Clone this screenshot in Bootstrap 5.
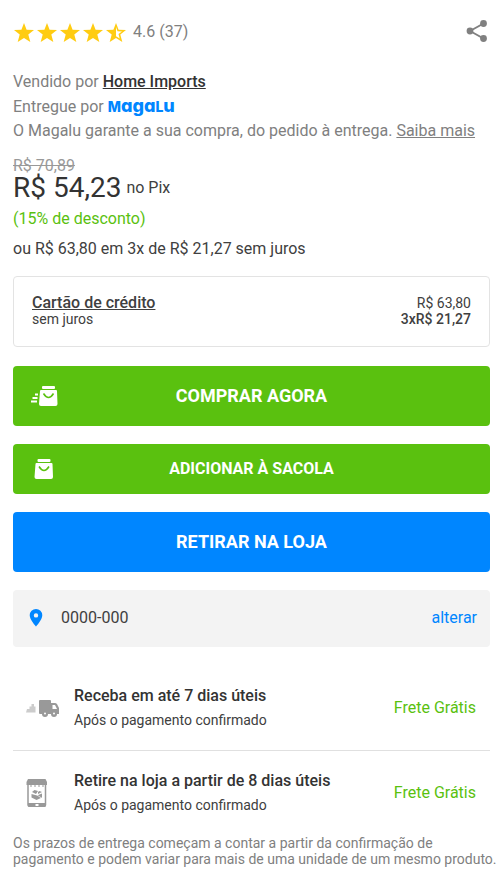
<!DOCTYPE html>
<html lang="pt-BR">
<head>
<meta charset="utf-8">
<meta name="viewport" content="width=device-width, initial-scale=1">
<title>Magalu - Comprar</title>
<link href="https://cdn.jsdelivr.net/npm/bootstrap@5.3.0/dist/css/bootstrap.min.css" rel="stylesheet">
<style>
  body { font-family: Roboto, "Liberation Sans", sans-serif; font-size: 16px; line-height: 24px; color: #404040; background: #fff; }
  svg { display: block; flex-shrink: 0; }
  a { color: inherit; }
  a:hover { color: #0086ff; }
  .product-panel { padding: 20px 10px 8px 13px; }
  .soft { color: #808080; }
  .ink { color: #333; }
  .go { color: #5ac10f; }
  .fine { font-size: 14px; line-height: 16px; }
  .semi { font-weight: 500; }
  .score { margin-left: 6px; }
  .share-btn { color: #808080; margin-right: 2px; }
  .seller { margin-top: 26px; }
  .brand-word { font-family: Inter, "Open Sans", sans-serif; font-weight: 800; font-size: 18px; line-height: 24px; color: #0086ff; font-feature-settings: "cv11"; }
  .brand-word span { font-size: 14px; text-transform: uppercase; }
  .old-price { margin-top: 15px; line-height: 16px; color: #999; }
  .price { font-size: 28px; line-height: 28px; }
  .unit { margin-left: 5px; }
  .discount { margin-top: 5px; }
  .installments { margin-top: 6px; }
  .pay-card { margin-top: 15px; padding: 18px 18px 19px; border: 1px solid #e3e3e3; border-radius: 4px; }
  .actions { gap: 18px; margin-top: 19px; }
  .cta { position: relative; color: #fff; border: 0; border-radius: 4px; font-weight: 700; font-size: 18px; line-height: 24px; padding: 18px; background: #5ac10f; }
  .cta:hover, .cta:focus { color: #fff; background: #4fab0c; }
  .cta-compact { font-size: 16px; padding: 13px 18px; }
  .cta-store { background: #0086ff; }
  .cta-store:hover, .cta-store:focus { background: #0074dd; }
  .cta svg { position: absolute; left: 17px; top: 50%; transform: translateY(-50%); }
  .zip-bar { background: #f3f3f3; border-radius: 4px; padding: 16px 13px 17px 16px; margin-top: 18px; }
  .zip-code { margin-left: 18px; }
  .zip-link { color: #0086ff; }
  .ship-list { margin-top: 18px; }
  .ship-row { padding: 18px 14px 18px 13px; min-height: 85px; }
  .ship-row + .ship-row { border-top: 1px solid #e0e0e0; padding-top: 16px; padding-bottom: 16px; }
  .ship-icon { width: 48px; color: #999; }
  .ship-text { padding-bottom: 4px; }
  .note { margin-right: -8px; }
</style>
</head>
<body>
<main class="product-panel">
  <header class="d-flex align-items-center justify-content-between">
    <div class="d-flex align-items-center soft">
      <svg width="114" height="22" viewBox="0 0 114 22" fill="#ffcc12" role="img" aria-label="4.6 de 5 estrelas">
        <defs><path id="star" d="M11 2 13.600 8.700 21 9.100 15.300 13.600 17.300 21 11 17 4.700 21 6.700 13.600 1 9.100 8.400 8.700Z"/></defs>
        <use href="#star"/><use href="#star" x="23"/><use href="#star" x="46"/><use href="#star" x="69"/>
        <path d="M103 2 105.600 8.700 113 9.100 107.300 13.600 109.300 21 103 17 96.700 21 98.700 13.600 93 9.100 100.400 8.700ZM103 6V15.200L106.700 17.500 105.500 13 109 10.500 104.500 10.300Z" fill-rule="evenodd"/>
      </svg>
      <span class="score">4.6 (37)</span>
    </div>
    <button type="button" class="btn p-0 border-0 share-btn" aria-label="Compartilhar">
      <svg width="22" height="24" viewBox="0 0 22 24" fill="currentColor"><path d="M4 11 17.500 3.500M4 11 17.500 18.500" stroke="currentColor" stroke-width="2"/><circle cx="4" cy="11" r="3.400"/><circle cx="17.500" cy="3.500" r="3.400"/><circle cx="17.500" cy="18.500" r="3.400"/></svg>
    </button>
  </header>

  <section class="seller soft">
    <div>Vendido por <a href="#" class="semi ink">Home Imports</a></div>
    <div class="d-flex align-items-center">Entregue por&nbsp;<span class="brand-word"><span>m</span>aga<span>l</span>u</span></div>
    <div>O Magalu garante a sua compra, do pedido à entrega. <a href="#">Saiba mais</a></div>
  </section>

  <section>
    <div class="old-price"><s>R$ 70,89</s></div>
    <div class="d-flex align-items-center"><span class="price ink">R$ 54,23</span><span class="unit">no Pix</span></div>
    <div class="discount go">(15% de desconto)</div>
    <div class="installments">ou R$ 63,80 em 3x de R$ 21,27 sem juros</div>
  </section>

  <section class="pay-card d-flex justify-content-between fine">
    <div><a href="#" class="fs-6 semi">Cartão de crédito</a><div>sem juros</div></div>
    <div class="text-end"><div>R$ 63,80</div><div class="semi">3xR$ 21,27</div></div>
  </section>

  <div class="d-grid actions">
    <button type="button" class="btn cta">
      <svg width="28" height="22" viewBox="0 0 28 22" fill="#fff"><rect x="12" y="1" width="13" height="3" rx="1"/><path d="M11 5h15q1 0 1 1l.5 13q0 2-2 2H11q-2 0-2-2L10 6q0-1 1-1Z"/><path d="M13.500 8.500q5 8 10 0" fill="none" stroke="#5ac10f" stroke-width="1.500"/><path d="M5 9.500h3M2.500 13h5M1 16.500h6" stroke="#fff" stroke-width="1.800"/></svg>
      COMPRAR AGORA
    </button>
    <button type="button" class="btn cta cta-compact">
      <svg width="28" height="22" viewBox="0 0 28 22" fill="#fff"><rect x="7.500" y="1" width="13" height="3" rx="1"/><path d="M6.500 5h15q1 0 1 1l.5 13q0 2-2 2H6.500q-2 0-2-2L5.500 6q0-1 1-1Z"/><path d="M9 8.500q5 8 10 0" fill="none" stroke="#5ac10f" stroke-width="1.500"/></svg>
      ADICIONAR À SACOLA
    </button>
    <button type="button" class="btn cta cta-store">RETIRAR NA LOJA</button>
  </div>

  <section class="zip-bar d-flex align-items-center">
    <svg width="14" height="18" viewBox="0 0 14 18" fill="#0086ff"><path d="M7 0a6.300 6.300 0 0 1 6.300 6.300C13.300 11 7 17.500 7 17.500S.7 11 .7 6.300A6.300 6.300 0 0 1 7 0Zm0 4.200a2.200 2.200 0 1 0 0 4.400 2.200 2.200 0 0 0 0-4.400Z"/></svg>
    <span class="zip-code me-auto">0000-000</span>
    <a href="#" class="zip-link text-decoration-none">alterar</a>
  </section>

  <section class="ship-list">
    <div class="ship-row d-flex align-items-center">
      <div class="ship-icon"><svg width="34" height="18" viewBox="0 0 34 18" fill="currentColor"><path d="M0 13.500 1 10h2.500V7.500h2V5h2.500v2.500h1.500v6Z" opacity=".5"/><path d="M14 1h10q1 0 1 1v2h4q1 0 2 1l2 4v6h-2a3 3 0 0 1-6 0h-3a3 3 0 0 1-6 0h-2q-1 0-1-1V2q0-1 1-1Z"/><path d="M26.500 6h2.500l2 4h-4.500Z" fill="#fff"/><circle cx="19" cy="14.500" r="1" fill="#fff"/><circle cx="28" cy="14.500" r="1" fill="#fff"/></svg></div>
      <div class="ship-text me-auto"><div class="semi ink">Receba em até 7 dias úteis</div><div class="fine mt-1">Após o pagamento confirmado</div></div>
      <span class="go">Frete Grátis</span>
    </div>
    <div class="ship-row d-flex align-items-center">
      <div class="ship-icon"><svg width="22" height="30" viewBox="0 0 22 30" fill="currentColor"><path d="M2 1h17.500L21 4v3H.5V4Z"/><path d="M2 6v21q0 1 1 1h15.500q1 0 1-1V6" fill="none" stroke="currentColor" stroke-width="1.500"/><path d="M4 8h2M8 8h2M12 8h2M16 8h2" stroke="currentColor"/><path d="M2 25h17.500v4H3q-1 0-1-1Z"/><rect x="9.500" y="26" width="3" height="2" fill="#fff"/><path d="M5.500 16v3.500L10.500 22 16 19.500v-4l-5 2ZM6 14 8.500 12l3.500 1-2 3ZM12 14l1.500-1 2.500 1-4 2Z"/><path d="m11 17 4.500 3" stroke="#fff" stroke-width=".7"/></svg></div>
      <div class="ship-text me-auto"><div class="semi ink">Retire na loja a partir de 8 dias úteis</div><div class="fine mt-1">Após o pagamento confirmado</div></div>
      <span class="go">Frete Grátis</span>
    </div>
  </section>

  <p class="note fine soft mb-0">Os prazos de entrega começam a contar a partir da confirmação de pagamento e podem variar para mais de uma unidade de um mesmo produto.</p>
</main>
<script src="https://cdn.jsdelivr.net/npm/bootstrap@5.3.0/dist/js/bootstrap.bundle.min.js"></script>
</body>
</html>
